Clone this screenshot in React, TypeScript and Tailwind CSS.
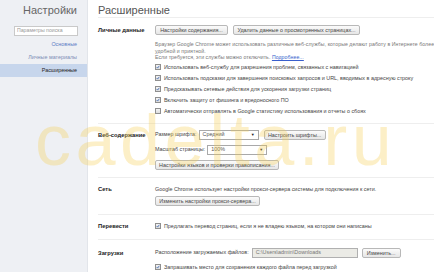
import React from "react";

const Check = ({ checked = true }: { checked?: boolean }) => (
  <span className="w-[6px] h-[6px] border border-[#8f8f8f] bg-gradient-to-b from-[#f4f4f4] to-[#dcdcdc] flex items-center justify-center shrink-0">
    {checked && (
      <svg width="6" height="6" viewBox="0 0 6 6">
        <path d="M1 3.2 L2.4 4.6 L5 1.2" stroke="#2553a8" strokeWidth="1.1" fill="none" />
      </svg>
    )}
  </span>
);

const Btn = ({ children, w }: { children: React.ReactNode; w: string }) => (
  <div className={`${w} shrink-0 h-[10px] border border-[#b8b8b8] rounded-[2px] bg-gradient-to-b from-[#fbfbfb] to-[#e6e6e6] text-[#444] leading-[8px] flex items-center justify-center whitespace-nowrap`}>
    {children}
  </div>
);

const CheckRow = ({ children, checked = true, cls = "" }: { children: React.ReactNode; checked?: boolean; cls?: string }) => (
  <div className={`h-[11px] flex items-center gap-[3px] ${cls}`}>
    <Check checked={checked} />
    <span className="whitespace-nowrap">{children}</span>
  </div>
);

const Select = ({ value, w }: { value: string; w: string }) => (
  <div className={`${w} shrink-0 h-[10px] border border-[#a9a9a9] bg-white flex items-center justify-between px-[3px] text-[#555]`}>
    <span>{value}</span>
    <span className="text-[4px] text-[#222]">▼</span>
  </div>
);

export default function App() {
  return (
    <div className="relative w-[434px] h-[272px] overflow-hidden flex bg-white font-['Liberation_Sans',Arial,sans-serif] text-[5.4px] text-[#444]">
      {/* Sidebar */}
      <div className="w-[88px] shrink-0 bg-[#eef0f4] border-r border-[#e2e5ea] flex flex-col">
        <div className="pt-[4px] pr-[10px] text-right text-[11px] leading-[13px] text-[#666]">Настройки</div>
        <div className="mt-[9px] ml-[14px] w-[64px] h-[10px] border border-[#c9c9c9] bg-white flex items-center pl-[2px] text-[#999] text-[5.2px]">
          Параметры поиска
        </div>
        <div className="mt-[2px] h-[13px] leading-[13px] pr-[10px] text-right text-[#5a7cc4]">Основные</div>
        <div className="h-[13px] leading-[13px] pr-[10px] text-right text-[#7d8db4]">Личные материалы</div>
        <div className="h-[13px] leading-[13px] pr-[10px] text-right text-[#222] bg-[#c7d6ec]">Расширенные</div>
      </div>

      {/* Main */}
      <div className="flex-1 min-w-0 pl-[10px] flex flex-col">
        <div className="h-[18px] pt-[4px] text-[11px] leading-[13px] text-[#555] border-b border-[#eeeeee]">Расширенные</div>

        {/* Личные данные */}
        <div className="flex border-b border-[#eeeeee] pt-[7px] pb-[6px]">
          <div className="w-[57px] shrink-0 font-bold text-[5.8px] leading-[10px] text-[#222] whitespace-nowrap">Личные данные</div>
          <div className="flex-1 flex flex-col">
            <div className="flex gap-[5px]">
              <Btn w="w-[73px]">Настройки содержания...</Btn>
              <Btn w="w-[127px]">Удалить данные о просмотренных страницах...</Btn>
            </div>
            <div className="mt-[6px] leading-[6.5px] text-[#777] text-[5.2px]">
              <div className="whitespace-nowrap tracking-[0.06px]">Браузер Google Chrome может использовать различные веб-службы, которые делают работу в Интернете более</div>
              <div className="whitespace-nowrap tracking-[0.06px]">удобной и приятной.</div>
              <div className="whitespace-nowrap tracking-[0.06px]">
                Если требуется, эти службы можно отключить. <span className="text-[#3a5fcd] underline">Подробнее...</span>
              </div>
            </div>
            <CheckRow cls="mt-[1px]">Использовать веб-службу для разрешения проблем, связанных с навигацией</CheckRow>
            <CheckRow>Использовать подсказки для завершения поисковых запросов и URL, вводимых в адресную строку</CheckRow>
            <CheckRow>Предсказывать сетевые действия для ускорения загрузки страниц</CheckRow>
            <CheckRow>Включить защиту от фишинга и вредоносного ПО</CheckRow>
            <CheckRow checked={false}>Автоматически отправлять в Google статистику использования и отчеты о сбоях</CheckRow>
          </div>
        </div>

        {/* Веб-содержание */}
        <div className="flex border-b border-[#eeeeee] pt-[6px] pb-[7px]">
          <div className="w-[57px] shrink-0 font-bold text-[5.8px] leading-[10px] text-[#222] whitespace-nowrap">Веб-содержание</div>
          <div className="flex-1 flex flex-col">
            <div className="h-[10px] flex items-center">
              <span className="shrink-0 whitespace-nowrap mr-[2px]">Размер шрифта:</span>
              <Select value="Средний" w="w-[60px]" />
              <div className="ml-[5px]">
                <Btn w="w-[62px]">Настроить шрифты...</Btn>
              </div>
            </div>
            <div className="mt-[5px] h-[10px] flex items-center">
              <span className="shrink-0 whitespace-nowrap mr-[2px]">Масштаб страницы:</span>
              <Select value="100%" w="w-[60px]" />
            </div>
            <div className="mt-[5px] flex">
              <Btn w="w-[124px]">Настройки языков и проверки правописания...</Btn>
            </div>
          </div>
        </div>

        {/* Сеть */}
        <div className="flex border-b border-[#eeeeee] pt-[8px] pb-[8px]">
          <div className="w-[57px] shrink-0 font-bold text-[5.8px] leading-[7px] text-[#222]">Сеть</div>
          <div className="flex-1 flex flex-col">
            <div className="leading-[7px] whitespace-nowrap">Google Chrome использует настройки прокси-сервера системы для подключения к сети.</div>
            <div className="mt-[3px] flex">
              <Btn w="w-[105px]">Изменить настройки прокси-сервера...</Btn>
            </div>
          </div>
        </div>

        {/* Перевести */}
        <div className="flex border-b border-[#eeeeee] pt-[6px] pb-[7px]">
          <div className="w-[57px] shrink-0 font-bold text-[5.8px] leading-[11px] text-[#222]">Перевести</div>
          <div className="flex-1">
            <CheckRow>Предлагать перевод страниц, если я не владею языком, на котором они написаны</CheckRow>
          </div>
        </div>

        {/* Загрузки */}
        <div className="flex pt-[8px]">
          <div className="w-[57px] shrink-0 font-bold text-[5.8px] leading-[10px] text-[#222]">Загрузки</div>
          <div className="flex-1 flex flex-col">
            <div className="h-[10px] flex items-center">
              <span className="shrink-0 whitespace-nowrap mr-[3px]">Расположение загружаемых файлов:</span>
              <div className="w-[106px] shrink-0 h-[10px] border border-[#b0b0b0] bg-[#ebebe6] flex items-center pl-[3px] text-[#777] whitespace-nowrap">C:\Users\admin\Downloads</div>
              <div className="ml-[4px]">
                <Btn w="w-[39px]">Изменить...</Btn>
              </div>
            </div>
            <CheckRow cls="mt-[4px]">Запрашивать место для сохранения каждого файла перед загрузкой</CheckRow>
          </div>
        </div>
      </div>

      {/* Watermark */}
      <div className="pointer-events-none absolute left-[35px] top-[104px] text-[72px] leading-[72px] tracking-[4.5px] text-[rgba(247,205,80,0.32)] whitespace-nowrap">
        cadelta.ru
      </div>
    </div>
  );
}
